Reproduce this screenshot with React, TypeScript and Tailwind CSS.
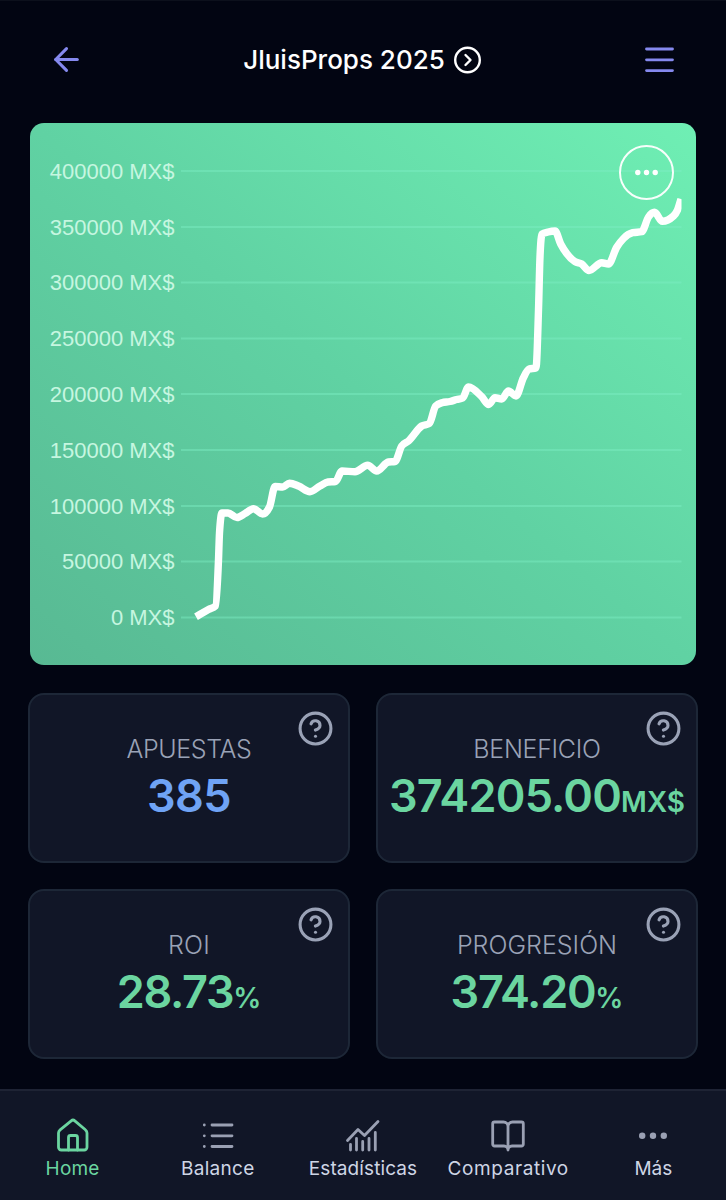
import { ArrowLeft, CircleHelp } from 'lucide-react'

const yLabels = [
    { label: '400000 MX$', y: 171 },
    { label: '350000 MX$', y: 227 },
    { label: '300000 MX$', y: 282.5 },
    { label: '250000 MX$', y: 338.5 },
    { label: '200000 MX$', y: 394 },
    { label: '150000 MX$', y: 450 },
    { label: '100000 MX$', y: 506 },
    { label: '50000 MX$', y: 561.5 },
    { label: '0 MX$', y: 617.5 },
]

const points = [
    [196, 616.7], [208.5, 609.5], [215.5, 606], [218.5, 560], [219.5, 533], [222, 513],
    [228, 513], [237, 517.5], [245, 513.5], [253.5, 508.7], [262.5, 514], [269.5, 507],
    [275, 486.5], [282.7, 487], [289.5, 483.3], [298.5, 486], [310, 491.7], [320, 486],
    [328, 482], [335.5, 481.5], [342, 471], [355, 471.7], [367.7, 465.3], [376.7, 471],
    [388.5, 462], [395, 461.5], [401.7, 446], [408.5, 441], [421.7, 426], [429.3, 423.5],
    [435.7, 406], [442, 402.7], [450, 401.5], [456.7, 399.5], [462.7, 398], [468.5, 387],
    [481.7, 396.7], [488.7, 404.5], [495, 397.7], [501.7, 399], [508.5, 391], [516, 396],
    [523.3, 378], [529, 369], [536, 368], [538.5, 310], [540, 257], [542, 234],
    [548, 232], [555, 231], [560.7, 244], [566.7, 253.5], [575, 261.7], [581.7, 264],
    [589, 270.5], [601.7, 262.7], [608.5, 264], [616.7, 247.3], [623.5, 238.5], [632.7, 232.7],
    [641.7, 231.7], [648.5, 217], [654.5, 212.3], [662.3, 221.3], [673.5, 216], [677.5, 210],
    [681, 199],
]

// monotone cubic curve, so the line never overshoots its points
function linePath(pts: number[][]) {
    const slopes = pts.slice(1).map((p, i) => (p[1] - pts[i][1]) / (p[0] - pts[i][0]))
    const tangents = pts.map((_, i) => {
        if (i === 0) return slopes[0]
        if (i === pts.length - 1) return slopes[i - 1]
        const a = slopes[i - 1]
        const b = slopes[i]
        const h0 = pts[i][0] - pts[i - 1][0]
        const h1 = pts[i + 1][0] - pts[i][0]
        const mean = (a * h1 + b * h0) / (h0 + h1)
        return (Math.sign(a) + Math.sign(b)) * Math.min(Math.abs(a), Math.abs(b), Math.abs(mean) / 2)
    })
    return pts.slice(1).reduce((d, p, i) => {
        const q = pts[i]
        const dx = (p[0] - q[0]) / 3
        return `${d}C${q[0] + dx},${q[1] + dx * tangents[i]} ${p[0] - dx},${p[1] - dx * tangents[i + 1]} ${p[0]},${p[1]}`
    }, `M${pts[0][0]},${pts[0][1]}`)
}

const stats = [
    { title: 'APUESTAS', value: '385', unit: '', color: 'text-[#6fa3f5]', titleTracking: 'tracking-[-0.4px]', tracking: 'tracking-[-0.6px]' },
    { title: 'BENEFICIO', value: '374205.00', unit: 'MX$', color: 'text-[#6bd5a0]', titleTracking: 'tracking-[-0.3px]', tracking: 'tracking-[-0.8px]' },
    { title: 'ROI', value: '28.73', unit: '%', color: 'text-[#6bd5a0]', titleTracking: 'tracking-[0.2px]', tracking: 'tracking-[-1.3px]' },
    { title: 'PROGRESIÓN', value: '374.20', unit: '%', color: 'text-[#6bd5a0]', titleTracking: 'tracking-[0px]', tracking: 'tracking-[-1.3px]' },
]

function HomeIcon() {
    return (
        <svg width="36" height="36" viewBox="0 0 36 36" fill="none" stroke="currentColor" strokeWidth="2.8" strokeLinecap="round" strokeLinejoin="round">
            <path d="M3.5 16c0-1.300.6-2.400 1.600-3.200L16.200 3.800c1.200-1 2.400-1 3.600 0l10.600 9c1 .8 1.600 1.900 1.600 3.200V30.200a2.800 2.800 0 0 1-2.800 2.800H6.300A2.800 2.800 0 0 1 3.500 30.200Z" />
            <path d="M13.500 33V20.500a2 2 0 0 1 2-2h5a2 2 0 0 1 2 2V33" />
        </svg>
    )
}

function ListIcon() {
    return (
        <svg width="36" height="36" viewBox="0 0 36 36" fill="none" stroke="currentColor" strokeWidth="2.8" strokeLinecap="round">
            <path d="M12 8H32M12 18.8H32M12 29.5H32M4.3 8h.01M4.3 18.8h.01M4.3 29.5h.01" />
        </svg>
    )
}

function StatsIcon() {
    return (
        <svg width="36" height="36" viewBox="0 0 36 36" fill="none" stroke="currentColor" strokeWidth="2.8" strokeLinecap="round" strokeLinejoin="round">
            <path d="M2.5 23.5 13 12.5 19.5 18.5 33 4.5" />
            <path d="M5.5 27.5v5.5M11.5 21.5v11.5M17.7 24.5v8.5M24 21.5v11.5M30.3 15.5v17.5" />
        </svg>
    )
}

function BookIcon() {
    return (
        <svg width="36" height="36" viewBox="0 0 36 36" fill="none" stroke="currentColor" strokeWidth="2.8" strokeLinejoin="round" strokeLinecap="round">
            <path d="M18 9.5a4.5 4.5 0 0 0-4.5-4.500H4.500a1.800 1.800 0 0 0-1.800 1.800V27.200a1.800 1.800 0 0 0 1.800 1.800H14a4 4 0 0 1 4 4 4 4 0 0 1 4-4h9.500a1.800 1.800 0 0 0 1.800-1.800V6.800A1.800 1.800 0 0 0 31.500 5h-9a4.500 4.500 0 0 0-4.500 4.500V33" />
        </svg>
    )
}

function DotsIcon() {
    return (
        <svg width="36" height="36" viewBox="0 0 36 36" fill="currentColor">
            <circle cx="7.2" cy="18.8" r="3.2" />
            <circle cx="18" cy="18.8" r="3.2" />
            <circle cx="28.8" cy="18.8" r="3.2" />
        </svg>
    )
}

const tabs = [
    { label: 'Home', icon: HomeIcon, tracking: 'tracking-[0.2px]', active: true },
    { label: 'Balance', icon: ListIcon, tracking: 'tracking-[0.3px]' },
    { label: 'Estadísticas', icon: StatsIcon, tracking: 'tracking-[0.1px]' },
    { label: 'Comparativo', icon: BookIcon, tracking: 'tracking-[0.6px]' },
    { label: 'Más', icon: DotsIcon, tracking: 'tracking-[0px]' },
]

function Chart() {
    return (
        <div className="relative mx-[30px] h-[542px] overflow-hidden rounded-[14px] bg-linear-to-tr from-[#58b993] via-[#60d2a3] to-[#6fefb4]">
            <svg width="666" height="542" viewBox="30 123 666 542" className="block">
                <clipPath id="plot">
                    <rect x="180" y="123" width="501.5" height="542" />
                </clipPath>
                {yLabels.map((l) => (
                    <g key={l.label}>
                        <text x="174.5" y={l.y + 7.5} textAnchor="end" fill="#c6f6e0" className="font-['Liberation_Sans',sans-serif] text-[22px]">
                            {l.label}
                        </text>
                        <path d={`M181 ${l.y}H681.5`} stroke="#7dedc4" strokeOpacity="0.45" strokeWidth="2" />
                    </g>
                ))}
                <path d={linePath(points)} clipPath="url(#plot)" fill="none" stroke="#fff" strokeWidth="7.4" strokeLinejoin="round" />
            </svg>
            <button className="absolute right-[22px] top-[22px] flex size-[55px] items-center justify-center rounded-full border-2 border-white/95">
                <svg width="25" height="7" viewBox="0 0 25 7" fill="#fff">
                    <circle cx="3.8" cy="3.5" r="2.7" />
                    <circle cx="12.5" cy="3.5" r="2.7" />
                    <circle cx="21.2" cy="3.5" r="2.7" />
                </svg>
            </button>
        </div>
    )
}

export default function App() {
    return (
        <div className="flex h-[1200px] w-[726px] flex-col overflow-hidden border-t border-[#0c101c] bg-[#020512] font-['Inter',sans-serif]">
            <header className="flex h-[122px] shrink-0 items-center justify-between px-[48px] pb-[5px] text-[#8589ee]">
                <ArrowLeft size={37} strokeWidth={2} />
                <h1 className="mr-[2px] flex items-center gap-[9px] text-[26px] font-medium text-white">
                    <span>JluisProps 2025</span>
                    <svg width="28" height="28" viewBox="0 0 28 28" fill="none" stroke="currentColor" strokeWidth="2.4" strokeLinecap="round" strokeLinejoin="round">
                        <circle cx="13.5" cy="14" r="12.3" />
                        <path d="m11.5 9 5 5-5 5" />
                    </svg>
                </h1>
                <svg width="36" height="36" viewBox="0 0 36 36" stroke="currentColor" strokeWidth="2.8" strokeLinecap="round">
                    <path d="M4.5 7h26M4.5 17.8h26M4.5 28.6h26" />
                </svg>
            </header>

            <Chart />

            <div className="mt-[28px] grid grid-cols-2 gap-[26px] px-[28px]">
                {stats.map((s) => (
                    <div key={s.title} className="relative flex h-[170px] flex-col items-center rounded-[16px] border-2 border-[#1d2737] bg-[#111627] pt-[36px]">
                        <CircleHelp size={37} strokeWidth={2} className="absolute right-[14.5px] top-[14.5px] text-[#9aa2b6]" />
                        <h2 className={`text-[25px] font-light leading-[36px] text-[#9aa2b6] ${s.titleTracking}`}>{s.title}</h2>
                        <p className={`whitespace-nowrap text-[45px] font-semibold leading-[58px] ${s.color} ${s.tracking}`}>
                            {s.value}
                            <span className="text-[28px] tracking-[0px]">{s.unit}</span>
                        </p>
                    </div>
                ))}
            </div>

            <nav className="mt-auto grid h-[111px] grid-cols-5 border-t-2 border-[#1e2334] bg-[#111627] pt-[26px]">
                {tabs.map((t) => (
                    <a key={t.label} className={`flex flex-col items-center ${t.active ? 'text-[#6bd5a0]' : 'text-[#9aa0b3]'}`}>
                        <t.icon />
                        <span className={`text-[19px] leading-[31px] ${t.tracking} ${t.active ? '' : 'text-[#ced5e5]'}`}>{t.label}</span>
                    </a>
                ))}
            </nav>
        </div>
    )
}
